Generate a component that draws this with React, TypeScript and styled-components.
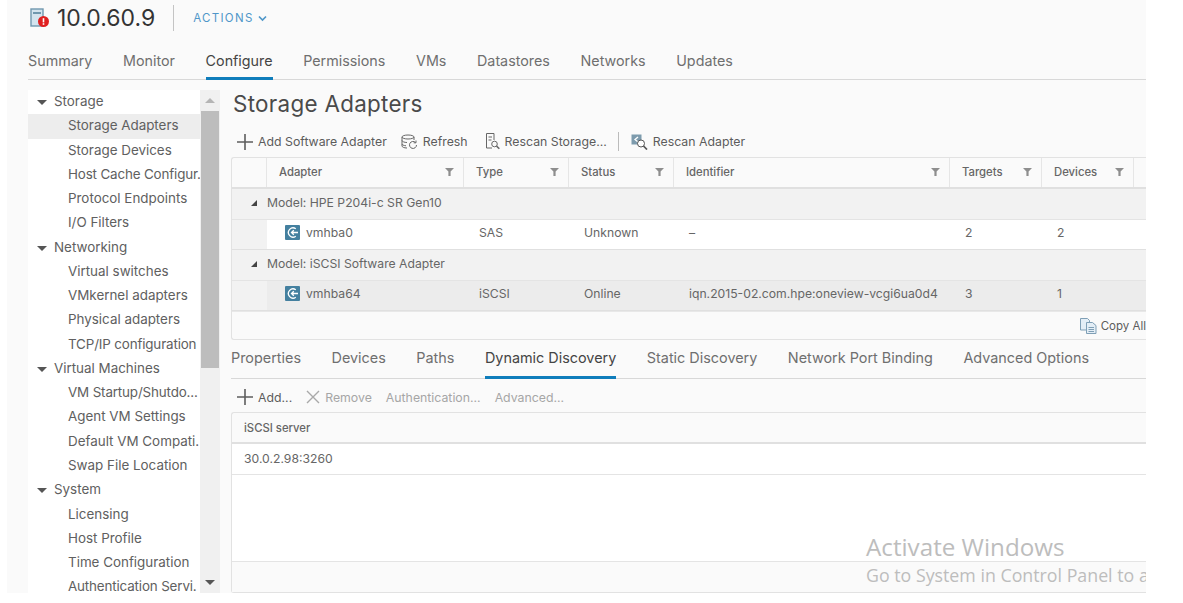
import React from "react";
import styled, { createGlobalStyle } from "styled-components";

const GlobalStyle = createGlobalStyle`
  html, body {
    margin: 0;
    padding: 0;
    background: #fff;
    font-family: "Inter", "Liberation Sans", sans-serif;
    color: #565656;
  }
`;

const COLUMNS = "35px 197px 105px 105px 276px 92px 92px 1fr";

const treeGroups = [
  {
    name: "Storage",
    items: ["Storage Adapters", "Storage Devices", "Host Cache Configur.", "Protocol Endpoints", "I/O Filters"],
  },
  {
    name: "Networking",
    items: ["Virtual switches", "VMkernel adapters", "Physical adapters", "TCP/IP configuration"],
  },
  {
    name: "Virtual Machines",
    items: ["VM Startup/Shutdo...", "Agent VM Settings", "Default VM Compati.", "Swap File Location"],
  },
  {
    name: "System",
    items: ["Licensing", "Host Profile", "Time Configuration", "Authentication Servi."],
  },
];

const topTabs = ["Summary", "Monitor", "Configure", "Permissions", "VMs", "Datastores", "Networks", "Updates"];
const lowerTabs = ["Properties", "Devices", "Paths", "Dynamic Discovery", "Static Discovery", "Network Port Binding", "Advanced Options"];
const headers = ["Adapter", "Type", "Status", "Identifier", "Targets", "Devices"];

const HostIcon = () => (
  <svg width="20" height="20" viewBox="0 0 20 20">
    <rect x="1" y="1" width="12" height="17" fill="#d3e3ee" stroke="#6f97ae" strokeWidth="1.4" />
    <rect x="3" y="4" width="8" height="2" fill="#6f97ae" />
    <circle cx="13.5" cy="13.5" r="5.5" fill="#e02020" />
    <rect x="12.7" y="10.2" width="1.6" height="4.2" fill="#fff" />
    <rect x="12.7" y="15.2" width="1.6" height="1.6" fill="#fff" />
  </svg>
);

const Chevron = () => (
  <svg width="9" height="7" viewBox="0 0 9 7">
    <path d="M1 1.5 4.5 5 8 1.5" fill="none" stroke="#4f97c9" strokeWidth="1.7" />
  </svg>
);

const Funnel = () => (
  <svg width="9" height="8" viewBox="0 0 9 8">
    <path d="M0 0h9L5.6 3.6V8H3.4V3.6z" fill="#8e8e8e" />
  </svg>
);

const Plus = () => (
  <svg width="16" height="16" viewBox="0 0 16 16">
    <path d="M8 0v16M0 8h16" stroke="#5e5e5e" strokeWidth="1.6" />
  </svg>
);

const Cross = () => (
  <svg width="14" height="14" viewBox="0 0 14 14">
    <path d="M1 1l12 12M13 1 1 13" stroke="#a9a9a9" strokeWidth="1.4" />
  </svg>
);

const RefreshIcon = () => (
  <svg width="17" height="16" viewBox="0 0 17 16" fill="none" stroke="#666" strokeWidth="1">
    <ellipse cx="7" cy="3" rx="6" ry="2" />
    <path d="M1 3v9c0 1 2 2 5 2M13 3v3M1 6.5c0 1 2.5 2 5 2M1 10c0 .8 1.5 1.5 4 1.8" />
    <path d="M15.5 11a3.5 3.5 0 1 1-1-2.5M15 6.5v2.3h-2.3" />
  </svg>
);

const RescanIcon = () => (
  <svg width="18" height="17" viewBox="-3 0 18 17" fill="none" stroke="#666" strokeWidth="1">
    <path d="M7 15H1.5V.5H9V7M3.5 4H7M3.5 7h3" />
    <circle cx="9.5" cy="11" r="2.8" />
    <path d="M11.5 13l2.8 2.8" strokeWidth="1.6" />
  </svg>
);

const RescanAdapterIcon = () => (
  <svg width="17" height="16" viewBox="0 0 17 16">
    <rect x="0.5" y="0.5" width="10" height="10" fill="#7d9bad" />
    <path d="M7 3 4 5.5 7 8" fill="none" stroke="#fff" strokeWidth="1.3" />
    <circle cx="10" cy="9.5" r="3.5" fill="#fff" stroke="#555" />
    <path d="M12.5 12l3.5 3.5" stroke="#555" strokeWidth="1.7" />
  </svg>
);

const AdapterIcon = () => (
  <svg width="15" height="15" viewBox="0 0 15 15">
    <rect width="15" height="15" rx="1" fill="#44809f" />
    <path d="M10.8 3.8A4.6 4.6 0 1 0 10.8 11.2" fill="none" stroke="#fff" strokeWidth="1.3" />
    <path d="M13 7.5H6.5M8.8 5.2 6.5 7.5l2.3 2.3" fill="none" stroke="#fff" strokeWidth="1.3" />
  </svg>
);

const CopyIcon = () => (
  <svg width="17" height="16" viewBox="0 0 17 16" fill="#e4eef6" stroke="#7f9fb6" strokeWidth="1">
    <path d="M.5.5h7l2 2V12H.5z" />
    <path d="M6.5 4.5h6l3.500 3v8H6.5z" />
    <path d="M8.5 9.5H14M8.5 11.5H14M8.5 13.5H14" fill="none" />
  </svg>
);

const Page = styled.div`
  height: 603px;
  padding-left: 7px;
  overflow: hidden;
`;

const Panel = styled.div`
  position: relative;
  box-sizing: border-box;
  width: 1139px;
  height: 593px;
  padding-left: 21px;
  background: #fafafa;
  overflow: hidden;
  display: flex;
  flex-direction: column;
`;

const Header = styled.header`
  display: flex;
  align-items: center;
  height: 36px;
  padding-left: 2px;
`;

const HostName = styled.h1`
  margin: 0 18px 0 7px;
  font-size: 23px;
  line-height: 36px;
  font-weight: 400;
  color: #333;
`;

const Divider = styled.span`
  width: 1px;
  height: 26px;
  background: #c4c4c4;
`;

const Actions = styled.button`
  display: flex;
  align-items: center;
  gap: 4px;
  margin-left: 19px;
  padding: 0;
  border: 0;
  background: none;
  font: inherit;
  font-size: 11.5px;
  letter-spacing: 1.3px;
  color: #4f97c9;
`;

const Tab = styled.span<{ $active?: boolean }>`
  display: flex;
  align-items: center;
  box-sizing: border-box;
  padding-top: 7px;
  font-size: 14.3px;
  color: ${(p) => (p.$active ? "#444" : "#6f6f6f")};
  border-bottom: 3px solid ${(p) => (p.$active ? "#0f7dbb" : "transparent")};
  margin-bottom: -1px;
  white-space: nowrap;
`;

const TabBar = styled.nav<{ $height: number }>`
  display: flex;
  gap: 30.7px;
  height: ${(p) => p.$height}px;
  border-bottom: 1px solid #d8d8d8;
`;

const LowerTabs = styled(TabBar)`
  margin-top: 2px;
  gap: 30.5px;
  ${Tab} {
    padding-top: 0;
    padding-bottom: 4px;
    font-size: 14.4px;
  }
`;

const Body = styled.div`
  display: flex;
  flex: 1;
  min-height: 0;
  margin-top: 10px;
`;

const TreeWrap = styled.aside`
  display: flex;
  width: 192px;
  flex: none;
`;

const Tree = styled.ul`
  width: 172px;
  margin: 0;
  padding: 0;
  list-style: none;
  background: #fff;
  overflow: hidden;
`;

const TreeRow = styled.li<{ $parent?: boolean; $selected?: boolean; $tight?: boolean }>`
  position: relative;
  height: 24.27px;
  line-height: 23px;
  padding-left: ${(p) => (p.$parent ? 26 : 40)}px;
  font-size: 13.4px;
  letter-spacing: ${(p) => (p.$tight ? "-0.15px" : "0")};
  white-space: nowrap;
  color: #606060;
  background: ${(p) => (p.$selected ? "#ededed" : "transparent")};
`;

const Caret = styled.span`
  position: absolute;
  left: 9px;
  top: 10px;
  border-left: 5px solid transparent;
  border-right: 5px solid transparent;
  border-top: 5px solid #555;
`;

const ScrollTrack = styled.div`
  display: flex;
  flex-direction: column;
  align-items: center;
  width: 20px;
  background: #f0f0f0;
`;

const ScrollArrow = styled.span<{ $down?: boolean }>`
  flex: none;
  height: 21px;
  display: flex;
  align-items: center;
  &::before {
    content: "";
    border-left: 5px solid transparent;
    border-right: 5px solid transparent;
    ${(p) => (p.$down ? "border-top: 5px solid #555;" : "border-bottom: 5px solid #b5b5b5;")}
  }
`;

const ScrollThumb = styled.div`
  width: 18px;
  height: 257px;
  background: #bdbdbd;
`;

const ScrollGap = styled.div`
  flex: 1;
`;

const Main = styled.main`
  flex: 1;
  min-width: 0;
  margin-left: 11px;
  display: flex;
  flex-direction: column;
`;

const Title = styled.h2`
  margin: 0;
  padding-left: 2px;
  height: 37px;
  line-height: 27px;
  font-size: 22.4px;
  font-weight: 400;
  letter-spacing: 0.3px;
  color: #4a4a4a;
`;

const Toolbar = styled.div`
  display: flex;
  align-items: center;
  gap: 14px;
  height: 30px;
  padding-left: 6px;
`;

const LowerToolbar = styled(Toolbar)`
  padding-top: 3px;
`;

const ToolButton = styled.span<{ $disabled?: boolean }>`
  display: flex;
  align-items: center;
  gap: 5px;
  font-size: 12.3px;
  white-space: nowrap;
  color: ${(p) => (p.$disabled ? "#a6a6a6" : "#5c5c5c")};
`;

const ToolDivider = styled.span`
  width: 1px;
  height: 19px;
  margin: 0 -2px 0 -3px;
  background: #bbb;
`;

const Table = styled.section<{ $height: number }>`
  box-sizing: border-box;
  height: ${(p) => p.$height}px;
  border: 1px solid #e2e2e2;
  border-right: 0;
  border-radius: 3px 0 0 3px;
  background: #fafafa;
  display: flex;
  flex-direction: column;
`;

const HeaderRow = styled.div`
  display: grid;
  grid-template-columns: ${COLUMNS};
  height: 31px;
  flex: none;
  box-sizing: border-box;
  border-bottom: 2px solid #e0e0e0;
`;

const HeaderCell = styled.div`
  display: flex;
  align-items: center;
  justify-content: space-between;
  padding: 0 9px 0 12px;
  font-size: 11.3px;
  font-weight: 500;
  color: #666;
  border-right: 1px solid #e6e6e6;
`;

const GroupRow = styled.div`
  position: relative;
  flex: none;
  box-sizing: border-box;
  height: 31px;
  line-height: 28px;
  padding-left: 35px;
  font-size: 12.2px;
  color: #666;
  background: #f2f2f2;
  border-bottom: 1px solid #e4e4e4;
`;

const GroupCaret = styled.span`
  position: absolute;
  left: 19px;
  top: 11px;
  border-left: 6px solid transparent;
  border-bottom: 6px solid #444;
`;

const DataRow = styled.div`
  display: grid;
  grid-template-columns: ${COLUMNS};
  flex: none;
  box-sizing: border-box;
  height: 30px;
  font-size: 12.2px;
  color: #666;
  background: #f2f2f2;
  border-bottom: 1px solid #e0e0e0;
`;

const DataCell = styled.div<{ $selected?: boolean; $first?: boolean }>`
  display: flex;
  align-items: center;
  gap: 6px;
  padding-left: ${(p) => (p.$first ? 18 : 15)}px;
  padding-bottom: 3px;
  white-space: nowrap;
  background: ${(p) => (p.$selected ? "#ececec" : "#fff")};
`;

const RowGutter = styled.div``;

const TableFooter = styled.div`
  flex: 1;
  display: flex;
  align-items: center;
  justify-content: flex-end;
  gap: 4px;
  font-size: 11.5px;
  color: #5c5c5c;
  border-top: 1px solid #e8e8e8;
`;

const ServerHeader = styled.div`
  flex: none;
  box-sizing: border-box;
  height: 31px;
  line-height: 30px;
  padding-left: 12px;
  font-size: 11.3px;
  font-weight: 500;
  color: #666;
  border-bottom: 2px solid #e0e0e0;
`;

const ServerRow = styled.div`
  flex: none;
  box-sizing: border-box;
  height: 31px;
  line-height: 29px;
  padding-left: 12px;
  font-size: 12.2px;
  color: #666;
  background: #fff;
  border-bottom: 1px solid #e4e4e4;
`;

const ServerBlank = styled.div`
  flex: 1;
  background: #fff;
`;

const ServerFooter = styled.div`
  flex: none;
  height: 30px;
  border-top: 1px solid #e4e4e4;
  background: #fafafa;
`;

const Watermark = styled.div`
  position: absolute;
  left: 859px;
  top: 530px;
  font-family: "Open Sans", "Liberation Sans", sans-serif;
  white-space: nowrap;
  color: #bdbdbd;
  pointer-events: none;
`;

const WatermarkTitle = styled.div`
  font-size: 24.2px;
  line-height: 33px;
`;

const WatermarkText = styled.div`
  font-size: 17.8px;
  line-height: 25px;
`;

const App: React.FC = () => {
  return (
    <Page>
      <GlobalStyle />
      <Panel>
        <Header>
          <HostIcon />
          <HostName>10.0.60.9</HostName>
          <Divider />
          <Actions>
            ACTIONS <Chevron />
          </Actions>
        </Header>
        <TabBar $height={43}>
          {topTabs.map((t) => (
            <Tab key={t} $active={t === "Configure"}>
              {t}
            </Tab>
          ))}
        </TabBar>
        <Body>
          <TreeWrap>
            <Tree>
              {treeGroups.map((g) => (
                <React.Fragment key={g.name}>
                  <TreeRow $parent>
                    <Caret />
                    {g.name}
                  </TreeRow>
                  {g.items.map((item) => (
                    <TreeRow key={item} $selected={item === "Storage Adapters"} $tight={item.length >= 20}>
                      {item}
                    </TreeRow>
                  ))}
                </React.Fragment>
              ))}
            </Tree>
            <ScrollTrack>
              <ScrollArrow />
              <ScrollThumb />
              <ScrollGap />
              <ScrollArrow $down />
            </ScrollTrack>
          </TreeWrap>
          <Main>
            <Title>Storage Adapters</Title>
            <Toolbar>
              <ToolButton>
                <Plus /> Add Software Adapter
              </ToolButton>
              <ToolButton>
                <RefreshIcon /> Refresh
              </ToolButton>
              <ToolButton>
                <RescanIcon /> Rescan Storage...
              </ToolButton>
              <ToolDivider />
              <ToolButton>
                <RescanAdapterIcon /> Rescan Adapter
              </ToolButton>
            </Toolbar>
            <Table $height={184}>
              <HeaderRow>
                <HeaderCell />
                {headers.map((h) => (
                  <HeaderCell key={h}>
                    {h}
                    <Funnel />
                  </HeaderCell>
                ))}
              </HeaderRow>
              <GroupRow>
                <GroupCaret />
                Model: HPE P204i-c SR Gen10
              </GroupRow>
              <DataRow>
                <RowGutter />
                <DataCell $first>
                  <AdapterIcon /> vmhba0
                </DataCell>
                <DataCell>SAS</DataCell>
                <DataCell>Unknown</DataCell>
                <DataCell>–</DataCell>
                <DataCell>2</DataCell>
                <DataCell>2</DataCell>
                <DataCell />
              </DataRow>
              <GroupRow>
                <GroupCaret />
                Model: iSCSI Software Adapter
              </GroupRow>
              <DataRow>
                <RowGutter />
                <DataCell $selected $first>
                  <AdapterIcon /> vmhba64
                </DataCell>
                <DataCell $selected>iSCSI</DataCell>
                <DataCell $selected>Online</DataCell>
                <DataCell $selected>iqn.2015-02.com.hpe:oneview-vcgi6ua0d4</DataCell>
                <DataCell $selected>3</DataCell>
                <DataCell $selected>1</DataCell>
                <DataCell $selected />
              </DataRow>
              <TableFooter>
                <CopyIcon /> Copy All
              </TableFooter>
            </Table>
            <LowerTabs $height={36}>
              {lowerTabs.map((t) => (
                <Tab key={t} $active={t === "Dynamic Discovery"}>
                  {t}
                </Tab>
              ))}
            </LowerTabs>
            <LowerToolbar>
              <ToolButton>
                <Plus /> Add...
              </ToolButton>
              <ToolButton $disabled>
                <Cross /> <span>Remove</span>
              </ToolButton>
              <ToolButton $disabled>Authentication...</ToolButton>
              <ToolButton $disabled>Advanced...</ToolButton>
            </LowerToolbar>
            <Table $height={181}>
              <ServerHeader>iSCSI server</ServerHeader>
              <ServerRow>30.0.2.98:3260</ServerRow>
              <ServerBlank />
              <ServerFooter />
            </Table>
          </Main>
        </Body>
        <Watermark>
          <WatermarkTitle>Activate Windows</WatermarkTitle>
          <WatermarkText>Go to System in Control Panel to a</WatermarkText>
        </Watermark>
      </Panel>
    </Page>
  );
};

export default App;
